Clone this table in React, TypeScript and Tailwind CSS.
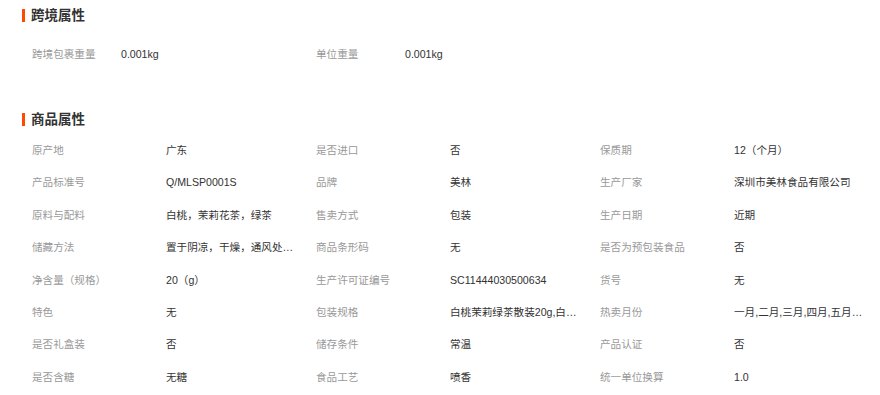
const cross = [
  ["跨境包裹重量", "0.001kg"],
  ["单位重量", "0.001kg"],
];

const attrs = [
  ["原产地", "广东"],
  ["是否进口", "否"],
  ["保质期", "12（个月）"],
  ["产品标准号", "Q/MLSP0001S"],
  ["品牌", "美林"],
  ["生产厂家", "深圳市美林食品有限公司"],
  ["原料与配料", "白桃，茉莉花茶，绿茶"],
  ["售卖方式", "包装"],
  ["生产日期", "近期"],
  ["储藏方法", "置于阴凉，干燥，通风处保存"],
  ["商品条形码", "无"],
  ["是否为预包装食品", "否"],
  ["净含量（规格）", "20（g）"],
  ["生产许可证编号", "SC11444030500634"],
  ["货号", "无"],
  ["特色", "无"],
  ["包装规格", "白桃茉莉绿茶散装20g,白桃茉莉绿茶袋装"],
  ["热卖月份", "一月,二月,三月,四月,五月,六月"],
  ["是否礼盒装", "否"],
  ["储存条件", "常温"],
  ["产品认证", "否"],
  ["是否含糖", "无糖"],
  ["食品工艺", "喷香"],
  ["统一单位换算", "1.0"],
];

function Heading({ title }: { title: string }) {
  return (
    <div className="flex h-[30px] items-center">
      <span className="h-[13px] w-[3px] bg-[#ff4a00]" />
      <h2 className="ml-[6px] text-[13.5px] font-bold text-[#333]">{title}</h2>
    </div>
  );
}

function Cell({ label, value, labelW }: { label: string; value: string; labelW: string }) {
  return (
    <div className="flex h-[32.4px] items-center pl-[10px]">
      <span className={`${labelW} shrink-0 text-[#999]`}>{label}</span>
      <span className="w-[130px] truncate text-[#333]">{value}</span>
    </div>
  );
}

export default function App() {
  return (
    <div
      className="h-[395px] w-[880px] bg-white pl-[22px] text-[10.6px] leading-[15px]"
      style={{ fontFamily: '"Liberation Sans", "Noto Sans CJK SC", sans-serif' }}
    >
      <Heading title="跨境属性" />
      <div className="mt-[8px] grid grid-cols-[284px_284px_284px]">
        {cross.map(([l, v]) => (
          <Cell key={l} label={l} value={v} labelW="w-[89px]" />
        ))}
      </div>
      <div className="mt-[34px]">
        <Heading title="商品属性" />
        <div className="grid grid-cols-[284px_284px_284px]">
          {attrs.map(([l, v]) => (
            <Cell key={l} label={l} value={v} labelW="w-[134px]" />
          ))}
        </div>
      </div>
    </div>
  );
}
